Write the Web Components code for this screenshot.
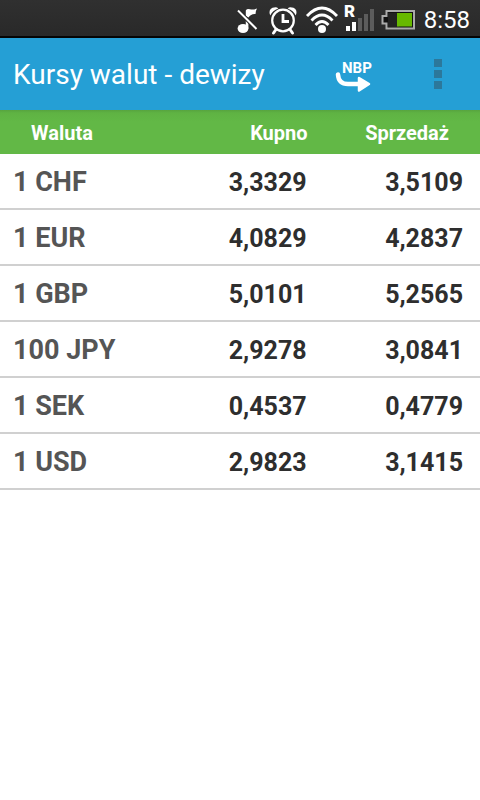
<!DOCTYPE html>
<html lang="pl">
<head>
<meta charset="utf-8">
<meta name="viewport" content="width=device-width, initial-scale=1">
<title>Kursy walut - dewizy</title>
<style>
  html, body { margin: 0; min-height: 100%; background: #fff; }
  body { font-family: Roboto, "Noto Sans", sans-serif; }
</style>
</head>
<body>
<currency-app></currency-app>

<script>
const define = (name, html, setup) => {
  const template = document.createElement('template');
  template.innerHTML = html;
  customElements.define(name, class extends HTMLElement {
    constructor() {
      super();
      this.attachShadow({ mode: 'open' }).append(template.content.cloneNode(true));
    }
    connectedCallback() { if (setup) setup(this, this.shadowRoot); }
  });
};

define('status-bar', `
<style>
  :host { display: flex; align-items: center; justify-content: flex-end; gap: 4px; height: 36px;
    padding: 0 10px 0 0; border-bottom: 2px solid #050505;
    background: linear-gradient(#303030, #292929); color: #fff; }
  svg { display: block; flex: none; }
  time { font-size: 24px; line-height: 36px; margin-top: 4px; }
</style>
<svg width="186" height="36" viewBox="0 0 186 36" aria-hidden="true">
  <!-- muted note -->
  <g fill="#fff">
    <ellipse cx="9" cy="28.500" rx="5.400" ry="4.500"/>
    <path d="M11.800 28V19l2.600 2.600v7z"/>
    <path d="M11.800 16V10.500Q13 8.500 16 9.300Q19.500 10 23 8.500Q21.500 11 21.500 14Q17 13.500 14.500 17.500z"/>
    <path d="M4 10.500L22.500 29" stroke="#292929" stroke-width="4"/>
    <path d="M4 10.500L22.500 29" stroke="#fff" stroke-width="2"/>
  </g>
  <!-- alarm clock -->
  <g fill="none" stroke="#fff" stroke-width="2.200">
    <circle cx="49" cy="20.500" r="10.800"/>
    <path d="M49 14v7.500h6" stroke-width="2.800"/>
    <path d="M42 29.500l-2.500 3.500M56 29.500l2.500 3.500" stroke-width="3" stroke-linecap="round"/>
  </g>
  <path d="M36.200 15.500Q34 10 38.500 7.800Q42.500 6.200 44.300 8.500Q38.500 10.500 36.200 15.500zM61.800 15.500Q64 10 59.500 7.800Q55.500 6.200 53.700 8.500Q59.500 10.500 61.800 15.500z" fill="#fff"/>
  <!-- wireless -->
  <g fill="none" stroke="#fff" stroke-width="2.800">
    <path d="M73 16Q88 0 103 16"/>
    <path d="M77.500 20.500Q88 9.500 98.500 20.500"/>
    <path d="M81.500 25Q88 18 94.500 25"/>
  </g>
  <circle cx="88" cy="29" r="4" fill="#fff"/>
  <!-- signal, roaming -->
  <text x="110" y="17" font-family="Roboto, sans-serif" font-size="17" font-weight="900" fill="#fff">R</text>
  <path d="M112 26h4v5h-4zM118 22h4v9h-4z" fill="#fff"/>
  <path d="M124 18h4v13h-4zM130 14h4v17h-4zM136 9h4v22h-4z" fill="#5c5c5c"/>
  <!-- battery -->
  <path d="M152.500 11H180v17.500H152.500V23.500H148.500V16H152.500z" fill="#111" stroke="#aaa" stroke-width="2"/>
  <path d="M154 13h11v14h-11z" fill="#222"/>
  <path d="M163 13h15v13.500h-15z" fill="#67b800"/>
</svg>
<time>8:58</time>`);

define('app-bar', `
<style>
  :host { display: flex; align-items: center; height: 72px; padding: 0 0 0 13px;
    background: #259fd5; color: #fff; }
  h1 { flex: 1; margin: 0; font-size: 28px; line-height: 36px; font-weight: 400; white-space: nowrap; padding-top: 2px; }
  button { display: grid; place-items: center; width: 84px; height: 72px; padding: 0;
    border: 0; background: none; color: inherit; cursor: pointer; }
  svg { display: block; }
</style>
<h1><slot></slot></h1>
<button type="button" aria-label="Kursy NBP">
  <svg width="40" height="40" viewBox="0 0 40 40" aria-hidden="true">
    <text x="8" y="19" font-family="Roboto, sans-serif" font-size="15" font-weight="700" fill="#fff">NBP</text>
    <path d="M4 20.500Q4.500 30 14 30H27" fill="none" stroke="#fff" stroke-width="4.500" stroke-linecap="round"/>
    <path d="M25 24L35 30L25 36.500z" fill="#fff" stroke="#fff" stroke-width="2.500" stroke-linejoin="round"/>
  </svg>
</button>
<button type="button" aria-label="Menu">
  <svg width="8" height="30" viewBox="0 0 8 30" aria-hidden="true">
    <path d="M0 0h8v8H0zM0 11h8v8H0zM0 22h8v8H0z" fill="#2c789b"/>
  </svg>
</button>`);

define('rates-table', `
<style>
  :host { display: block; }
  table { width: 100%; table-layout: fixed; border-collapse: separate; border-spacing: 0; }
  th, td { box-sizing: border-box; padding: 2px 0 0; font-weight: 700; text-align: right; white-space: nowrap; }
  thead th { height: 44px; font-size: 20px; color: #fff;
    background: linear-gradient(#57a43f, #5fb343 3px, #62b846 12px); }
  thead th:first-child { text-align: left; padding-left: 31px; }
  thead th:nth-child(2) { padding-right: 14px; }
  thead th:nth-child(3) { padding-right: 31px; }
  tbody th, tbody td { height: 56px; border-bottom: 2px solid #d0d0d0; }
  tbody th { padding-left: 13px; text-align: left; font-size: 27px; color: #555; }
  tbody td { font-size: 25px; color: #2e2e2e; }
  tbody td:nth-child(2) { padding-right: 15px; }
  tbody td:nth-child(3) { padding-right: 17px; }
</style>
<table>
  <colgroup><col style="width:34%"><col style="width:33%"><col></colgroup>
  <thead><tr><th scope="col">Waluta</th><th scope="col">Kupno</th><th scope="col">Sprzedaż</th></tr></thead>
  <tbody></tbody>
</table>`, (host, root) => {
  const body = root.querySelector('tbody');
  body.replaceChildren();
  for (const [currency, buy, sell] of host.rates || []) {
    const row = body.insertRow();
    const head = document.createElement('th');
    head.scope = 'row';
    head.textContent = currency;
    row.append(head);
    row.insertCell().textContent = buy;
    row.insertCell().textContent = sell;
  }
});

define('currency-app', `
<style>
  :host { display: flex; flex-direction: column; min-height: 100vh; background: #fff; }
</style>
<status-bar></status-bar>
<app-bar>Kursy walut - dewizy</app-bar>
<main></main>`, (host, root) => {
  const table = document.createElement('rates-table');
  table.rates = [
    ['1 CHF', '3,3329', '3,5109'],
    ['1 EUR', '4,0829', '4,2837'],
    ['1 GBP', '5,0101', '5,2565'],
    ['100 JPY', '2,9278', '3,0841'],
    ['1 SEK', '0,4537', '0,4779'],
    ['1 USD', '2,9823', '3,1415']
  ];
  root.querySelector('main').replaceChildren(table);
});
</script>
</body>
</html>
